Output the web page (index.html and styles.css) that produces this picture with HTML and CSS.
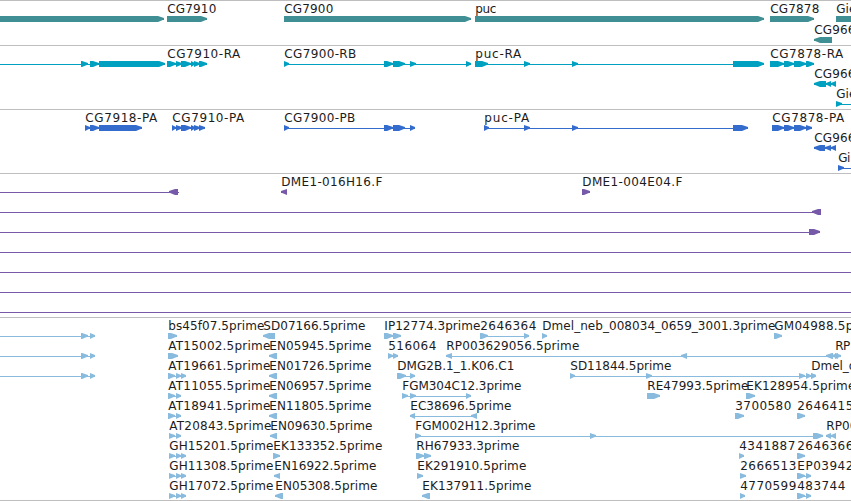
FILE: index.html
```html
<!DOCTYPE html>
<html lang="en">
<head>
<meta charset="utf-8">
<title>Genome browser</title>
<link rel="stylesheet" href="styles.css">
</head>
<body>
<main class="browser" id="browser"></main>
<script src="tracks.js"></script>
</body>
</html>
```
FILE: styles.css
```css
body {
  margin: 0;
  background: #fff;
  overflow: hidden;
}

.browser {
  display: flex;
  flex-direction: column;
  width: 851px;
  height: 500px;
  border-bottom: 1px solid #bebebe;
}

.track {
  border-top: 1px solid #bebebe;
  box-sizing: border-box;
  overflow: hidden;
}

.track svg {
  display: block;
  width: 851px;
  height: 100%;
}

.track text {
  font: 12px "DejaVu Sans", sans-serif;
  fill: #1c1c1c;
}

.genes { height: 45px; color: #3f8f94; }
.transcripts { height: 64px; color: #00a0c0; }
.proteins { height: 64px; color: #336ccc; }
.clones { height: 144px; color: #7759a9; }
.ests { height: 183px; color: #88bbdd; }

.shape { fill: currentColor; }
```
FILE: tracks.js
```javascript
// Feature: [row, strand, exons, label, label width, line start, line end]
const prime3 = [[81, 88], [90, 95]];
const tracks = [
  { name: "genes", step: 21, features: [
    [0, 1, [[-5, 164]]],
    [0, 1, [[167, 207]], "CG7910", 49],
    [0, 1, [[284, 471]], "CG7900", 49],
    [0, 1, [[475, 764]], "puc", 21],
    [0, 1, [[770, 814]], "CG7878", 49],
    [0, 1, [[836, 900]], "Gie", 20],
    [1, -1, [[814, 832]], "CG966", 41]
  ] },
  { name: "transcripts", step: 20, features: [
    [0, 1, [[81, 88], [90, 99], [99, 165]], "", 0, 0],
    [0, 1, [[167, 176], [176, 182], [181, 191], [191, 195], [194, 200], [199, 207]], "CG7910-RA", 73],
    [0, 1, [[284, 289], [384, 393], [393, 405], [410, 416], [466, 471]], "CG7900-RB", 72],
    [0, 1, [[475, 488], [524, 530], [572, 578], [733, 764]], "puc-RA", 46],
    [0, 1, [[770, 784], [784, 794], [794, 806], [806, 814]], "CG7878-RA", 73],
    [1, -1, [[814, 826], [826, 831], [831, 836]], "CG966", 41],
    [2, 1, [[836, 842]], "Gie", 20, 836, 851]
  ] },
  { name: "proteins", step: 20, features: [
    [0, 1, [[85, 90], [90, 99], [99, 142]], "CG7918-PA", 72],
    [0, 1, [[172, 176], [176, 182], [181, 191], [191, 195], [194, 200], [199, 205]], "CG7910-PA", 72],
    [0, 1, [[284, 289], [384, 393], [393, 405], [410, 415]], "CG7900-PB", 71],
    [0, 1, [[484, 489], [524, 530], [572, 578], [733, 748]], "puc-PA", 45],
    [0, 1, [[772, 784], [784, 794], [794, 806], [806, 812]], "CG7878-PA", 72],
    [1, -1, [[814, 825], [825, 831], [831, 836]], "CG966", 41],
    [2, 1, [[838, 844]], "Gi", 12, 838, 851]
  ] },
  { name: "clones", step: 20, features: [
    [0, -1, [[169, 178]], "", 0, 0, 179],
    [0, -1, [[281, 287]], "DME1-016H16.F", 101],
    [0, 1, [[582, 590]], "DME1-004E04.F", 100],
    [1, -1, [[812, 821]], "", 0, 0],
    [2, 1, [[809, 820]], "", 0, 0],
    [3, 1, [], "", 0, 0, 851],
    [4, 1, [], "", 0, 0, 851],
    [5, 1, [], "", 0, 0, 851],
    [6, 1, [], "", 0, 0, 851]
  ] },
  { name: "ests", step: 20, features: [
    [0, 1, prime3, "", 0, 0],
    [0, 1, [[168, 177]], "bs45f07.5prime", 96],
    [0, -1, [[263, 275]], "SD07166.5prime", 102],
    [0, 1, [[384, 393], [393, 401]], "IP12774.3prime", 96],
    [0, 1, [[480, 488], [524, 529]], "2646364", 56],
    [0, 1, [[542, 547]], "Dmel_neb_008034_0659_3001.3prime", 233],
    [0, 1, [[774, 782]], "GM04988.5p", 79],
    [1, 1, prime3, "", 0, 0],
    [1, 1, [[168, 178]], "AT15002.5prime", 102],
    [1, -1, [[269, 277]], "EN05945.5prime", 102],
    [1, 1, [[388, 393], [393, 398]], "516064", 48],
    [1, -1, [[446, 452], [681, 687], [826, 833]], "RP003629056.5prime", 133],
    [1, -1, [[832, 838]]],
    [1, 1, [[835, 841]], "RP", 15],
    [2, 1, prime3, "", 0, 0],
    [2, 1, [[168, 175], [176, 181], [181, 186]], "AT19661.5prime", 102],
    [2, -1, [[269, 277]], "EN01726.5prime", 102],
    [2, 1, [[397, 406], [410, 415]], "DMG2B.1_1.K06.C1", 117],
    [2, 1, [[570, 575], [646, 652], [799, 805], [806, 811], [811, 816]], "SD11844.5prime", 101],
    [2, 1, [[811, 816]], "Dmel_d", 45],
    [3, 1, [[168, 175], [176, 181]], "AT11055.5prime", 102],
    [3, -1, [[269, 277]], "EN06957.5prime", 102],
    [3, 1, [[402, 408], [410, 416], [466, 471]], "FGM304C12.3prime", 119],
    [3, 1, [[647, 660]], "RE47993.5prime", 101],
    [3, 1, [[746, 755]], "EK128954.5prime", 109],
    [4, 1, [[168, 175], [176, 181]], "AT18941.5prime", 102],
    [4, -1, [[269, 277]], "EN11805.5prime", 102],
    [4, -1, [[410, 415], [471, 477]], "EC38696.5prime", 101],
    [4, 1, [[735, 744]], "3700580", 56],
    [4, 1, [[797, 805]], "2646415", 56],
    [5, 1, [[169, 175], [176, 181]], "AT20843.5prime", 102],
    [5, -1, [[270, 277]], "EN09630.5prime", 102],
    [5, 1, [[415, 421], [590, 596], [813, 823]], "FGM002H12.3prime", 120],
    [5, -1, [[826, 831], [831, 836]], "RP00", 31],
    [6, 1, [[169, 175], [176, 181], [181, 186]], "GH15201.5prime", 104],
    [6, 1, [[273, 280]], "EK133352.5prime", 109],
    [6, 1, [[416, 424], [424, 431]], "RH67933.3prime", 103],
    [6, 1, [[739, 744]], "4341887", 56],
    [6, 1, [[797, 805]], "2646366", 56],
    [7, 1, [[169, 175], [176, 181], [181, 186]], "GH11308.5prime", 104],
    [7, -1, [[274, 280]], "EN16922.5prime", 102],
    [7, 1, [[417, 423]], "EK291910.5prime", 109],
    [7, 1, [[740, 746]], "2666513", 56],
    [7, 1, [[797, 805], [806, 811]], "EP03942", 56],
    [8, 1, [[169, 175], [176, 181], [181, 186]], "GH17072.5prime", 104],
    [8, -1, [[275, 283]], "EN05308.5prime", 102],
    [8, -1, [[422, 430]], "EK137911.5prime", 109],
    [8, 1, [[740, 745]], "4770599", 56],
    [8, 1, [[797, 805], [806, 811]], "483744", 48]
  ] }
];

// An exon is a six-pixel bar whose end tapers in the reading direction.
function exon(x0, x1, y, strand) {
  const head = Math.min(6, x1 - x0);
  const tip = strand > 0 ? x1 : x0;
  const base = strand > 0 ? x1 - head : x0 + head;
  const back = strand > 0 ? x0 : x1;
  return `<path class="shape" d="M${back} ${y}H${base}L${tip} ${y + 2}V${y + 3.6}L${base} ${y + 6}H${back}Z"/>`;
}

function feature([row, strand, exons, label = "", width, from, to], step) {
  const y = 15 + row * step;
  const start = from ?? exons[0][0];
  const end = to ?? exons[exons.length - 1][1];
  let out = `<rect class="shape" x="${start}" y="${y + 3}" width="${end - start}" height="1"/>`;
  out += exons.map(([a, b]) => exon(a, b, y, strand)).join("");
  if (label) {
    out += `<text x="${exons[0][0] + 0.3}" y="${y - 3}" textLength="${width}">${label}</text>`;
  }
  return out;
}

document.getElementById("browser").innerHTML = tracks.map(t =>
  `<section class="track ${t.name}"><svg>${t.features.map(f => feature(f, t.step)).join("")}</svg></section>`
).join("");
```
